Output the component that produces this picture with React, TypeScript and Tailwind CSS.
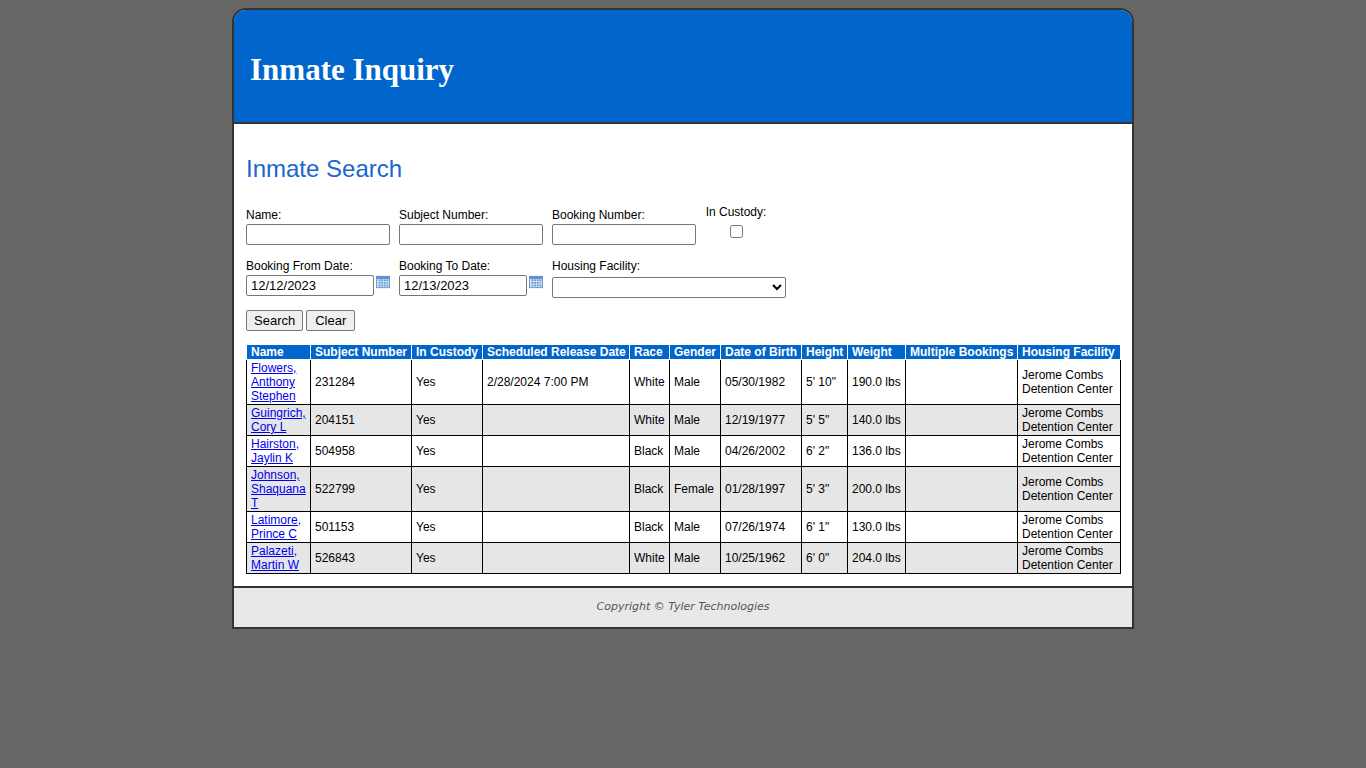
import React from 'react';

const rows = [
  ['Flowers, Anthony Stephen', '231284', 'Yes', '2/28/2024 7:00 PM', 'White', 'Male', '05/30/1982', '5\' 10"', '190.0 lbs'],
  ['Guingrich, Cory L', '204151', 'Yes', '', 'White', 'Male', '12/19/1977', '5\' 5"', '140.0 lbs'],
  ['Hairston, Jaylin K', '504958', 'Yes', '', 'Black', 'Male', '04/26/2002', '6\' 2"', '136.0 lbs'],
  ['Johnson, Shaquana T', '522799', 'Yes', '', 'Black', 'Female', '01/28/1997', '5\' 3"', '200.0 lbs'],
  ['Latimore, Prince C', '501153', 'Yes', '', 'Black', 'Male', '07/26/1974', '6\' 1"', '130.0 lbs'],
  ['Palazeti, Martin W', '526843', 'Yes', '', 'White', 'Male', '10/25/1962', '6\' 0"', '204.0 lbs'],
];

const heads = ['Name', 'Subject Number', 'In Custody', 'Scheduled Release Date', 'Race', 'Gender', 'Date of Birth', 'Height', 'Weight', 'Multiple Bookings', 'Housing Facility'];
const widths = [64, 101, 71, 147, 40, 51, 81, 46, 58, 112, 103];

const Cal = () => (
  <svg width="16" height="14" viewBox="0 0 16 14" className="ml-0.5 -mt-2">
    <rect x="0.5" y="0.5" width="15" height="13" fill="#cfe0f5" stroke="#5b8fd0" />
    <rect x="0.5" y="0.5" width="15" height="3" fill="#5b8fd0" />
    {[4, 7, 10].map(y => [3, 6, 9, 12].map(x => <rect key={x + '-' + y} x={x} y={y} width="2" height="2" fill={x === 12 && y === 7 ? '#e8a040' : '#6a98d8'} />))}
  </svg>
);

const inp = 'h-[21px] border border-[#767676] rounded-[2px] bg-white px-1 text-[13px]';

export default function App() {
  return (
    <div className="min-h-screen bg-[#666666] pt-2" style={{ fontFamily: '"Liberation Sans", Arial, sans-serif' }}>
      <div className="mx-auto w-[902px] border-2 border-[#333] rounded-t-[14px] overflow-hidden bg-white">
        <div className="h-[114px] bg-[#0066cc] border-b-2 border-[#333] flex items-center pl-4">
          <h1 className="text-white text-[31px] font-bold mt-2" style={{ fontFamily: '"Liberation Serif", serif' }}>Inmate Inquiry</h1>
        </div>
        <div className="px-3 pb-3">
          <h2 className="text-[#1a66cc] text-[24px] mt-[27px] mb-[19px]">Inmate Search</h2>
          <div className="text-[12px] text-black">
            <div className="flex gap-[9px]">
              <label className="flex flex-col w-[144px]">Name:<input className={inp} /></label>
              <label className="flex flex-col w-[144px]">Subject Number:<input className={inp} /></label>
              <label className="flex flex-col w-[144px]">Booking Number:<input className={inp} /></label>
              <div className="flex flex-col items-center -mt-[3px] w-[62px]">In Custody:<input type="checkbox" className="mt-1 w-[13px] h-[13px]" /></div>
            </div>
            <div className="flex gap-[9px] mt-3">
              <label className="flex flex-col w-[144px]">Booking From Date:<div className="flex items-center"><input className={inp + ' w-[128px]'} defaultValue="12/12/2023" /><Cal /></div></label>
              <label className="flex flex-col w-[144px]">Booking To Date:<div className="flex items-center"><input className={inp + ' w-[128px]'} defaultValue="12/13/2023" /><Cal /></div></label>
              <label className="flex flex-col w-[234px]">Housing Facility:<select className={inp + ' w-[234px] h-[19px] mt-[2px]'}><option></option></select></label>
            </div>
            <div className="flex gap-[3px] mt-3">
              <button className="h-[21px] px-[7px] border border-[#767676] rounded-[2px] bg-[#efefef] text-[13px]">Search</button>
              <button className="h-[21px] px-[8px] border border-[#767676] rounded-[2px] bg-[#efefef] text-[13px]">Clear</button>
            </div>
          </div>
          <table className="mt-[13px] border-collapse text-[12px] table-fixed w-[874px]">
            <colgroup>{widths.map((w, i) => <col key={i} style={{ width: w }} />)}</colgroup>
            <thead>
              <tr className="bg-[#0066cc] text-white">
                {heads.map(h => <th key={h} className="text-left font-bold px-1 h-[15px] leading-[14px] border border-white whitespace-nowrap">{h}</th>)}
              </tr>
            </thead>
            <tbody>
              {rows.map((r, i) => (
                <tr key={i} className={i % 2 ? 'bg-[#e6e6e6]' : 'bg-white'}>
                  <td className="border border-black px-1 py-px leading-[14px] align-top"><a href="#" className="text-[#0000ee] underline">{r[0]}</a></td>
                  {r.slice(1).map((c, j) => <td key={j} className="border border-black px-1 leading-[14px]">{c}</td>)}
                  <td className="border border-black px-1"></td>
                  <td className="border border-black px-1 leading-[14px]">Jerome Combs Detention Center</td>
                </tr>
              ))}
            </tbody>
          </table>
        </div>
        <div className="h-[41px] border-t-2 border-[#333] bg-[#e8e8e8] flex items-center justify-center text-[11px] italic text-[#555]" style={{ fontFamily: '"DejaVu Sans", sans-serif' }}>
          Copyright © Tyler Technologies
        </div>
      </div>
    </div>
  );
}
